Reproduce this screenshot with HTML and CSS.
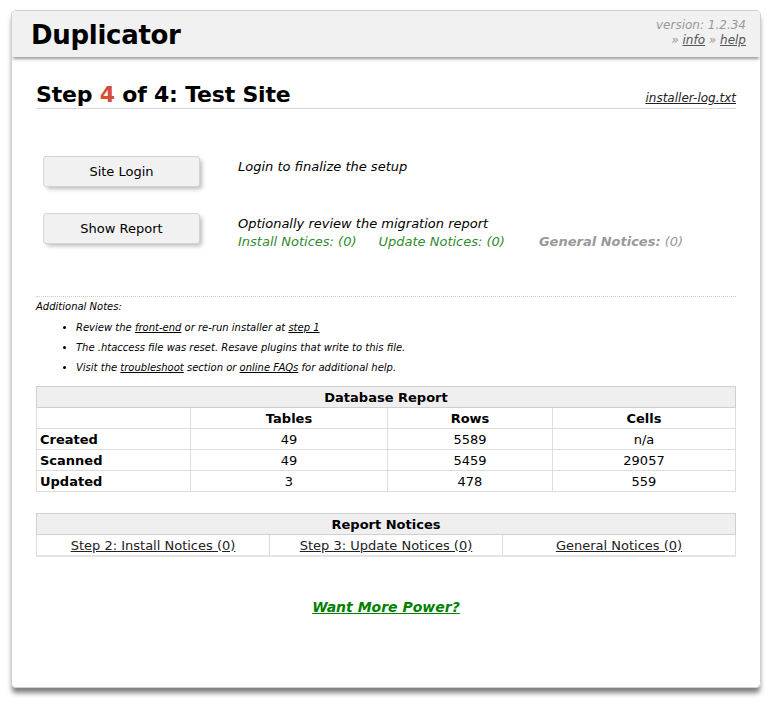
FILE: index.html
```html
<!DOCTYPE html>
<html>
<head>
<meta charset="utf-8">
<link rel="stylesheet" href="styles.css">
</head>
<body>
<div class="frame">
  <div class="hdr">
    <div class="logo">Duplicator</div>
    <div class="meta">
      <div>version: 1.2.34</div>
      <div>&raquo; <a href="#">info</a> &raquo; <a href="#">help</a></div>
    </div>
  </div>
  <div class="body">
    <div class="title-row">
      <div class="title">Step <span class="num">4</span> of 4: Test Site</div>
      <a class="log" href="#">installer-log.txt</a>
    </div>

    <div class="actions">
      <div class="act">
        <button class="btn">Site Login</button>
        <div class="desc">Login to finalize the setup</div>
      </div>
      <div class="act">
        <button class="btn">Show Report</button>
        <div class="desc">
          Optionally review the migration report
          <div class="notices">
            <span class="ok">Install Notices: (0)</span>
            <span class="ok">Update Notices: (0)</span>
            <span class="gen"><b>General Notices:</b> (0)</span>
          </div>
        </div>
      </div>
    </div>

    <div class="notes">
      <div class="notes-h">Additional Notes:</div>
      <ul>
        <li>Review the <a href="#">front-end</a> or re-run installer at <a href="#">step 1</a></li>
        <li>The .htaccess file was reset. Resave plugins that write to this file.</li>
        <li>Visit the <a href="#">troubleshoot</a> section or <a href="#">online FAQs</a> for additional help.</li>
      </ul>
    </div>

    <table class="rpt db">
      <colgroup><col class="c1"><col class="c2"><col class="c3"><col class="c4"></colgroup>
      <tr><th colspan="4" class="cap">Database Report</th></tr>
      <tr><td></td><th>Tables</th><th>Rows</th><th>Cells</th></tr>
      <tr><th class="lbl">Created</th><td>49</td><td>5589</td><td>n/a</td></tr>
      <tr><th class="lbl">Scanned</th><td>49</td><td>5459</td><td>29057</td></tr>
      <tr><th class="lbl">Updated</th><td>3</td><td>478</td><td>559</td></tr>
    </table>

    <table class="rpt nt">
      <tr><th colspan="3" class="cap">Report Notices</th></tr>
      <tr>
        <td><a href="#">Step 2: Install Notices (0)</a></td>
        <td><a href="#">Step 3: Update Notices (0)</a></td>
        <td><a href="#">General Notices (0)</a></td>
      </tr>
    </table>

    <div class="power"><a href="#">Want More Power?</a></div>
  </div>
</div>
</body>
</html>
```

FILE: styles.css
```css
html, body { margin: 0; padding: 0; background: #fff; }
body { font-family: Verdana, "DejaVu Sans", sans-serif; color: #000; padding: 10px 0 17px 11px; }
a { color: #000; }

.frame {
  width: 748px;
  height: 676px;
  border: 1px solid #cfcfcf;
  border-radius: 5px;
  box-shadow: 0 6px 5px -1px rgba(0, 0, 0, 0.5);
  overflow: hidden;
}
.hdr {
  background: #f1f1f1;
  height: 46px;
  display: flex;
  justify-content: space-between;
  align-items: flex-start;
  padding: 0 14px 0 19px;
  box-shadow: 0 3px 3px -1px #999;
  position: relative;
  z-index: 1;
}
.logo {
  font-size: 26px;
  font-weight: bold;
  line-height: 30px;
  padding-top: 9px;
  letter-spacing: -0.3px;
}
.meta {
  font-size: 12px;
  font-style: italic;
  color: #999;
  text-align: right;
  line-height: 15px;
  padding-top: 7px;
}
.meta a { color: #555; }

.body { padding: 0 24px; }
.title-row {
  display: flex;
  justify-content: space-between;
  align-items: baseline;
  border-bottom: 1px solid #d8d8d8;
  margin-top: 24px;
  padding-bottom: 0;
}
.title { font-size: 22px; font-weight: bold; line-height: 27px; letter-spacing: -0.2px; }
.title .num { color: #d54e3a; }
.log { font-size: 12px; font-style: italic; color: #222; }

.actions { padding-top: 47px; display: flex; flex-direction: column; gap: 26px; }
.act { display: flex; align-items: flex-start; gap: 38px; padding-left: 7px; }
.btn {
  width: 157px;
  height: 31px;
  background: #f1f1f1;
  border: 1px solid #d4d4d4;
  border-radius: 3px;
  box-shadow: 3px 3px 4px -1px #bbb;
  font-family: Verdana, "DejaVu Sans", sans-serif;
  font-size: 13px;
  color: #000;
  padding: 0;
  flex: none;
}
.desc { font-size: 13px; font-style: italic; line-height: 18px; padding-top: 2px; }
.notices { margin-top: 0; display: flex; gap: 22px; }
.ok { color: #2e8b2e; }
.gen { color: #999; margin-left: 12px; }

.notes {
  margin-top: 45px;
  border-top: 1px dotted #ccc;
  padding-top: 3px;
  font-size: 10px;
  font-style: italic;
}
.notes-h { line-height: 13px; }
.notes ul { margin: 5px 0 0 0; padding-left: 40px; list-style: disc; }
.notes li { line-height: 20px; }

.rpt {
  width: 700px;
  border-collapse: collapse;
  font-size: 13px;
  table-layout: fixed;
}
.rpt td, .rpt th {
  border: 1px solid #ddd;
  height: 20px;
  padding: 0 3px;
  text-align: center;
}
.rpt th { font-weight: bold; }
.rpt .cap { background: #efefef; border-color: #d0d0d0; }
.rpt .lbl { text-align: left; }
.db { margin-top: 8px; }
.db .c1 { width: 154px; }
.db .c2 { width: 197px; }
.db .c3 { width: 165px; }
.nt { margin-top: 21px; }
.nt tr:last-child td { border-bottom: 2px solid #e4e4e4; }
.nt a { color: #222; }

.power {
  text-align: center;
  margin-top: 42px;
  font-size: 14px;
  font-weight: bold;
  font-style: italic;
}
.power a { color: #008000; }
```
